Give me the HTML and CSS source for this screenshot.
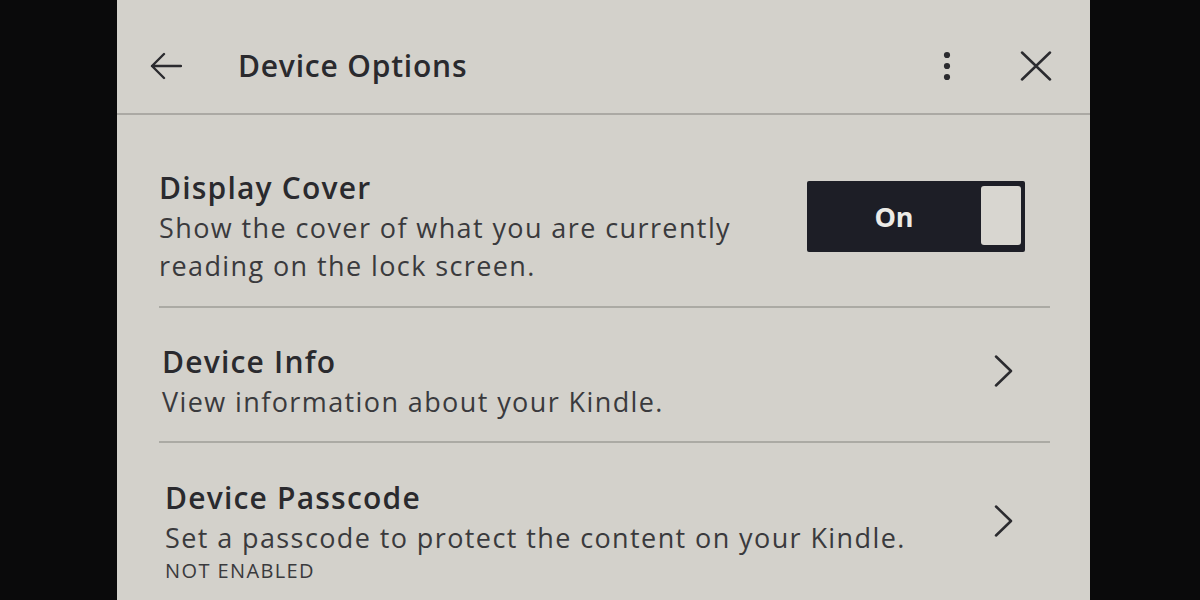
FILE: index.html
```html
<!DOCTYPE html>
<html lang="en">
<head>
<meta charset="utf-8">
<title>Device Options</title>
<link rel="stylesheet" href="styles.css">
</head>
<body>
<div class="device">
  <div class="screen">
    <header class="topbar">
      <button class="icon-btn back" aria-label="Back">
        <svg width="34" height="28" viewBox="0 0 34 28"><path d="M33 14H4M16 2L4 14l12 12" fill="none" stroke="#2b2b2f" stroke-width="2.4" stroke-linecap="round" stroke-linejoin="round"/></svg>
      </button>
      <h1 class="title">Device Options</h1>
      <button class="icon-btn kebab" aria-label="More">
        <svg width="10" height="30" viewBox="0 0 10 30"><circle cx="5" cy="4" r="3.1" fill="#2b2b2f"/><circle cx="5" cy="15" r="3.1" fill="#2b2b2f"/><circle cx="5" cy="26" r="3.1" fill="#2b2b2f"/></svg>
      </button>
      <button class="icon-btn close" aria-label="Close">
        <svg width="32" height="30" viewBox="0 0 32 30"><path d="M2 1.5l28 27M30 1.5L2 28.5" fill="none" stroke="#2b2b2f" stroke-width="2.5" stroke-linecap="round"/></svg>
      </button>
    </header>
    <main class="list">
      <section class="row row-cover">
        <div class="text">
          <h2 class="row-title">Display Cover</h2>
          <p class="row-desc">Show the cover of what you are currently<br>reading on the lock screen.</p>
        </div>
        <div class="toggle">
          <span class="toggle-label">On</span>
          <span class="toggle-knob"></span>
        </div>
      </section>
      <section class="row row-info">
        <div class="text">
          <h2 class="row-title">Device Info</h2>
          <p class="row-desc">View information about your Kindle.</p>
        </div>
        <svg class="chev" width="20" height="32" viewBox="0 0 20 32"><path d="M2 1.5l15 14.5L2 30.5" fill="none" stroke="#2b2b2f" stroke-width="2.5" stroke-linecap="round" stroke-linejoin="round"/></svg>
      </section>
      <section class="row row-pass">
        <div class="text">
          <h2 class="row-title">Device Passcode</h2>
          <p class="row-desc">Set a passcode to protect the content on your Kindle.</p>
          <p class="row-status">NOT ENABLED</p>
        </div>
        <svg class="chev" width="20" height="32" viewBox="0 0 20 32"><path d="M2 1.5l15 14.5L2 30.5" fill="none" stroke="#2b2b2f" stroke-width="2.5" stroke-linecap="round" stroke-linejoin="round"/></svg>
      </section>
    </main>
  </div>
</div>
</body>
</html>
```
FILE: styles.css
```css
* { box-sizing: border-box; }
html, body {
  margin: 0;
  padding: 0;
  overflow: hidden;
}
body {
  background: #0a0a0b;
  width: 1200px;
  height: 600px;
  font-family: "Open Sans", "Noto Sans", sans-serif;
  color: #2b2b2f;
}
.device {
  display: flex;
  height: 600px;
  padding-left: 117px;
}
.screen {
  width: 973px;
  height: 600px;
  background: #d3d1cb;
  display: flex;
  flex-direction: column;
}
.topbar {
  height: 115px;
  flex: none;
  display: flex;
  align-items: center;
  padding: 19px 38px 0 31px;
  border-bottom: 2px solid #aba9a4;
}
.icon-btn {
  background: none;
  border: 0;
  padding: 0;
  display: flex;
  align-items: center;
  justify-content: center;
}
.back { margin-right: 56px; }
.title {
  margin: 0;
  font-size: 30px;
  line-height: 38px;
  font-weight: 600;
  letter-spacing: 0.8px;
  flex: 1;
  color: #2a2a2e;
}
.kebab { margin-right: 68px; }
.list {
  flex: 1;
  padding: 0 40px 0 42px;
}
.row {
  display: flex;
  align-items: flex-start;
  border-bottom: 2px solid #abaaa4;
}
.text { flex: 1; }
.row-title {
  margin: 0;
  font-size: 30px;
  line-height: 42px;
  font-weight: 600;
  letter-spacing: 1.2px;
  color: #2a2a2e;
}
.row-desc {
  margin: 0;
  font-size: 27px;
  line-height: 38px;
  letter-spacing: 1.4px;
  color: #3a3a3d;
}
.row-cover { padding: 52px 0 21px; }
.row-info { padding: 33px 0 20px 3px; }
.row-pass { border-bottom: 0; padding: 34px 0 0 6px; }
.row-status {
  margin: 0;
  font-size: 20px;
  line-height: 28px;
  letter-spacing: 1.4px;
  color: #3a3a3d;
}
.toggle {
  width: 218px;
  height: 71px;
  background: #1d1e26;
  border-radius: 2px;
  display: flex;
  align-items: stretch;
  padding: 5px 4px 7px 0;
  margin: 14px 25px 0 0;
}
.toggle-label {
  flex: 1;
  display: flex;
  align-items: center;
  justify-content: center;
  color: #ecebe6;
  font-weight: 700;
  font-size: 27px;
  line-height: 1;
  padding-top: 1px;
}
.toggle-knob {
  width: 40px;
  background: #d8d6d0;
  border-radius: 3px;
}
.chev { margin: 14px 36px 0 0; }
.row-pass .chev { margin-top: 28px; }
```
